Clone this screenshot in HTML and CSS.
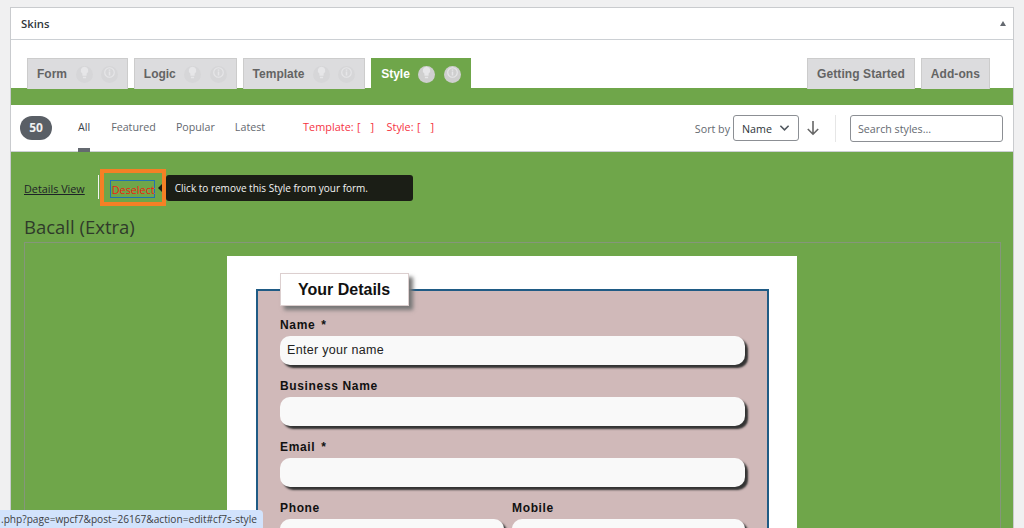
FILE: index.html
```html
<!DOCTYPE html>
<html lang="en">
<head>
  <meta charset="UTF-8">
  <title>Skins</title>
  <link rel="stylesheet" href="styles.css">
</head>
<body>
<div class="panel">
  <div class="panel-head">
    <h2>Skins</h2>
    <span class="collapse"></span>
  </div>
  <!--tabs-->
  <div class="tabs">
    <div class="tab">Form
      <span class="tab-icon"><svg viewBox="0 0 16 16"><path d="M8 2.5a3.5 3.5 0 0 0-2 6.4V11h4V8.900A3.500 3.500 0 0 0 8 2.500zM6.500 12h3v1.500h-3z"/></svg></span>
      <span class="tab-icon"><svg viewBox="0 0 16 16"><circle cx="8" cy="8" r="4.500" fill="none"/><path d="M7.300 5.200h1.400v1.200H7.300zM7.300 7h1.400v3.800H7.300z"/></svg></span>
    </div>
    <div class="tab">Logic
      <span class="tab-icon"><svg viewBox="0 0 16 16"><path d="M8 2.5a3.5 3.5 0 0 0-2 6.4V11h4V8.900A3.500 3.500 0 0 0 8 2.500zM6.500 12h3v1.500h-3z"/></svg></span>
      <span class="tab-icon"><svg viewBox="0 0 16 16"><circle cx="8" cy="8" r="4.500" fill="none"/><path d="M7.300 5.200h1.400v1.200H7.300zM7.300 7h1.400v3.800H7.300z"/></svg></span>
    </div>
    <div class="tab">Template
      <span class="tab-icon"><svg viewBox="0 0 16 16"><path d="M8 2.5a3.5 3.5 0 0 0-2 6.4V11h4V8.900A3.500 3.500 0 0 0 8 2.500zM6.500 12h3v1.500h-3z"/></svg></span>
      <span class="tab-icon"><svg viewBox="0 0 16 16"><circle cx="8" cy="8" r="4.500" fill="none"/><path d="M7.300 5.200h1.400v1.200H7.300zM7.300 7h1.400v3.800H7.300z"/></svg></span>
    </div>
    <div class="tab tab-active">Style
      <span class="tab-icon"><svg viewBox="0 0 16 16"><path d="M8 2.5a3.5 3.5 0 0 0-2 6.4V11h4V8.900A3.500 3.500 0 0 0 8 2.500zM6.500 12h3v1.500h-3z"/></svg></span>
      <span class="tab-icon"><svg viewBox="0 0 16 16"><circle cx="8" cy="8" r="4.500" fill="none"/><path d="M7.300 5.200h1.400v1.200H7.300zM7.300 7h1.400v3.800H7.300z"/></svg></span>
    </div>
    <div class="tab tab-wide tab-push">Getting Started</div>
    <div class="tab tab-wide">Add-ons</div>
  </div>
  <div class="green-bar"></div>
  <!--filter bar-->
  <div class="toolbar">
    <span class="count">50</span>
    <a class="filter filter-current">All</a>
    <a class="filter">Featured</a>
    <a class="filter">Popular</a>
    <a class="filter">Latest</a>
    <span class="picked">Template: [ &nbsp; ]</span>
    <span class="picked">Style: [ &nbsp; ]</span>
    <span class="sort-label">Sort by</span>
    <div class="sort-select"><span>Name</span>
      <svg viewBox="0 0 12 8"><path d="M1.500 1.500 6 6l4.500-4.500" fill="none" stroke="#50575e" stroke-width="1.700"/></svg>
    </div>
    <svg class="sort-arrow" viewBox="0 0 14 16"><path d="M7 1v13M1.800 9 7 14.200 12.200 9" fill="none" stroke="#666" stroke-width="1.600"/></svg>
    <span class="sep"></span>
    <div class="search">Search styles...</div>
  </div>
  <!--style preview-->
  <div class="stage">
    <div class="actions">
      <a class="details">Details View</a>
      <span class="action-sep"></span>
      <div class="deselect-mark"><a class="deselect">Deselect</a></div>
      <div class="tip">Click to remove this Style from your form.</div>
    </div>
    <h3>Bacall (Extra)</h3>
    <div class="frame">
      <div class="card">
        <fieldset>
          <legend>Your Details</legend>
          <div class="rows">
            <label>Name <span class="req">*</span></label>
            <div class="field">Enter your name</div>
            <label>Business Name</label>
            <div class="field"></div>
            <label>Email <span class="req">*</span></label>
            <div class="field"></div>
            <div class="two-col">
              <div>
                <label>Phone</label>
                <div class="field"></div>
              </div>
              <div>
                <label>Mobile</label>
                <div class="field"></div>
              </div>
            </div>
          </div>
        </fieldset>
      </div>
    </div>
  </div>
</div>
<div class="status">.php?page=wpcf7&amp;post=26167&amp;action=edit#cf7s-style</div>
</body>
</html>
```

FILE: styles.css
```css
* {
  margin: 0;
  padding: 0;
  box-sizing: border-box;
}

html,
body {
  height: 528px;
  overflow: hidden;
}

body {
  background-color: #f0f0f1;
  font-family: "Open Sans", "Noto Sans", sans-serif;
  padding: 7px 10px 0;
}

.panel {
  width: 1004px;
  height: 521px;
  border: 1px solid #c9cbce;
  border-bottom: 0;
  background-color: #fff;
  overflow: hidden;
}

.panel-head {
  height: 32px;
  border-bottom: 1px solid #ccd0d4;
  display: flex;
  align-items: center;
  justify-content: space-between;
  padding: 0 7px 0 10px;
}

.panel-head h2 {
  font-size: 11.300px;
  font-weight: 600;
  color: #32373c;
}

.collapse {
  border-left: 3.500px solid transparent;
  border-right: 3.500px solid transparent;
  border-bottom: 5px solid #646970;
}

/*tabs*/
.tabs {
  height: 48px;
  padding: 18px 23px 0 16px;
  display: flex;
  gap: 5.800px;
}

.tab {
  height: 31px;
  padding: 0 9px;
  background-color: #dcdcde;
  border: 1px solid #ccc;
  border-bottom: 0;
  color: #646464;
  font-family: "Liberation Sans", sans-serif;
  font-size: 12px;
  font-weight: 700;
  display: flex;
  align-items: center;
  white-space: nowrap;
}

.tab-wide {
  letter-spacing: 0.08px;
}

.tab-icon {
  width: 17px;
  height: 17px;
  margin-left: 8.500px;
  border-radius: 50%;
  background-color: #d6d6d8;
  display: flex;
}

.tab-icon svg {
  width: 17px;
  height: 17px;
  margin-top: -1.500px;
  fill: #e6e6e8;
  stroke: #e6e6e8;
  stroke-width: 0;
}

.tab-icon svg circle {
  stroke-width: 1.100;
}

.tab-active {
  background-color: #6fa64a;
  border-color: #6fa64a;
  color: #fff;
}

.tab-active .tab-icon {
  background-color: #cfcfcf;
}

.tab-push {
  margin-left: auto;
}

.green-bar {
  height: 17px;
  background-color: #6fa64a;
}

/*filter bar*/
.toolbar {
  height: 47px;
  border-bottom: 1px solid #ccd0d4;
  padding-left: 9px;
  display: flex;
  align-items: center;
  font-size: 10.700px;
  color: #646970;
}

.count {
  width: 32px;
  height: 24px;
  border-radius: 12px;
  background-color: #5a5f66;
  color: #f0f0f1;
  font-weight: 700;
  font-size: 12px;
  line-height: 24px;
  text-align: center;
  margin-right: 26px;
}

.filter {
  margin-right: 20px;
  height: 47px;
  line-height: 44px;
  position: relative;
}

.filter-current {
  color: #3c434a;
  margin-right: 21px;
}

.filter-current::after {
  content: "";
  position: absolute;
  left: 0;
  right: 0;
  bottom: 0;
  height: 4px;
  background-color: #646970;
}

.picked {
  color: #f5333f;
  font-size: 10.900px;
  word-spacing: 0.5px;
  margin-left: 18px;
  margin-right: -5.500px;
  line-height: 44px;
  height: 47px;
  white-space: nowrap;
}

.sort-label {
  margin-left: auto;
  margin-right: 3px;
  padding-top: 1px;
}

.sort-select {
  width: 66px;
  height: 26px;
  border: 1px solid #8c8f94;
  border-radius: 3px;
  padding: 0 8px;
  color: #2c3338;
  display: flex;
  align-items: center;
  justify-content: space-between;
}

.sort-select span {
  padding-top: 1px;
}

.sort-select svg {
  width: 11px;
  height: 8px;
}

.sort-arrow {
  width: 14px;
  height: 16px;
  margin: 0 15px 0 7px;
}

.sep {
  width: 1px;
  height: 27px;
  background-color: #e6e6e6;
  margin-right: 14px;
}

.search {
  width: 153px;
  height: 27px;
  margin: 1px 10px 0 0;
  border: 1px solid #8c8f94;
  border-radius: 3px;
  padding-left: 7px;
  line-height: 27px;
  color: #646970;
}

/*green stage*/
.stage {
  background-color: #6fa64a;
  height: 380px;
  padding: 0 12px 0 13px;
  color: #2c3338;
}

.actions {
  height: 63px;
  padding-top: 22px;
  display: flex;
  align-items: flex-start;
  font-size: 11px;
}

.details {
  color: #1d2327;
  text-decoration: underline;
  font-size: 10.800px;
  margin-top: 7px;
}

.action-sep {
  width: 1px;
  height: 24px;
  background-color: #f4f4f4;
  margin: 1px 0 0 13px;
}

.deselect-mark {
  width: 66px;
  height: 37px;
  margin: -5px 0 0 1px;
  border: 4px solid #f58025;
  padding: 7px 0 0 6px;
}

.deselect {
  display: block;
  width: 45px;
  height: 18px;
  border: 1px solid #2271b1;
  color: #f0200f;
  font-size: 10.800px;
  line-height: 17px;
  padding-left: 1px;
  white-space: nowrap;
}

.tip {
  width: 247px;
  height: 26px;
  margin-top: 1px;
  background-color: #1b1e16;
  border-radius: 3px;
  color: #f4f4f4;
  font-size: 10px;
  line-height: 27px;
  padding-left: 9px;
  position: relative;
}

.tip::before {
  content: "";
  position: absolute;
  left: -8px;
  top: 9px;
  border-top: 4px solid transparent;
  border-bottom: 4px solid transparent;
  border-right: 4px solid #1b1e16;
}

.stage h3 {
  font-size: 18.500px;
  font-weight: 400;
  line-height: 24px;
  color: #2f3b2a;
}

.frame {
  border: 1px solid #85967a;
  border-bottom: 0;
  margin-top: 3px;
  height: 300px;
  padding: 13px 0 0 202px;
}

.card {
  width: 570px;
  height: 280px;
  background-color: #fff;
  padding: 17px 29px 0;
}

fieldset {
  height: 300px;
  border: 2px solid #1f5b85;
  background-color: #d0b9b9;
  padding: 0 22px;
  font-family: "Liberation Sans", sans-serif;
}

legend {
  width: 129px;
  height: 33px;
  padding-left: 17px;
  background-color: #fff;
  border: 1px solid #dccfcf;
  box-shadow: 4px 4px 4px #777;
  color: #111;
  font-size: 16px;
  font-weight: 700;
  line-height: 31px;
  text-align: left;
}

.rows {
  padding-top: 10px;
}

fieldset label {
  display: block;
  height: 20px;
  color: #111;
  font-size: 12px;
  font-weight: 700;
  letter-spacing: 0.65px;
  line-height: 18px;
}

.req {
  margin-left: 2px;
}

.field {
  height: 29px;
  margin-bottom: 12px;
  background-color: #f9f9f9;
  border-radius: 10px;
  box-shadow: 3px 3px 2px #333;
  color: #222;
  font-size: 12.500px;
  letter-spacing: 0.3px;
  line-height: 29px;
  padding-left: 7px;
}

.two-col {
  display: flex;
  gap: 8px;
}

.two-col > div:first-child {
  width: 224px;
}

.two-col > div:last-child {
  width: 233px;
}

.status {
  position: absolute;
  left: 0;
  bottom: 0;
  height: 18px;
  width: 263px;
  padding-left: 1px;
  background-color: #d2e3fc;
  border-top-right-radius: 4px;
  color: #3c4043;
  font-family: "Open Sans", sans-serif;
  font-size: 10.150px;
  line-height: 18px;
  white-space: nowrap;
}
```
